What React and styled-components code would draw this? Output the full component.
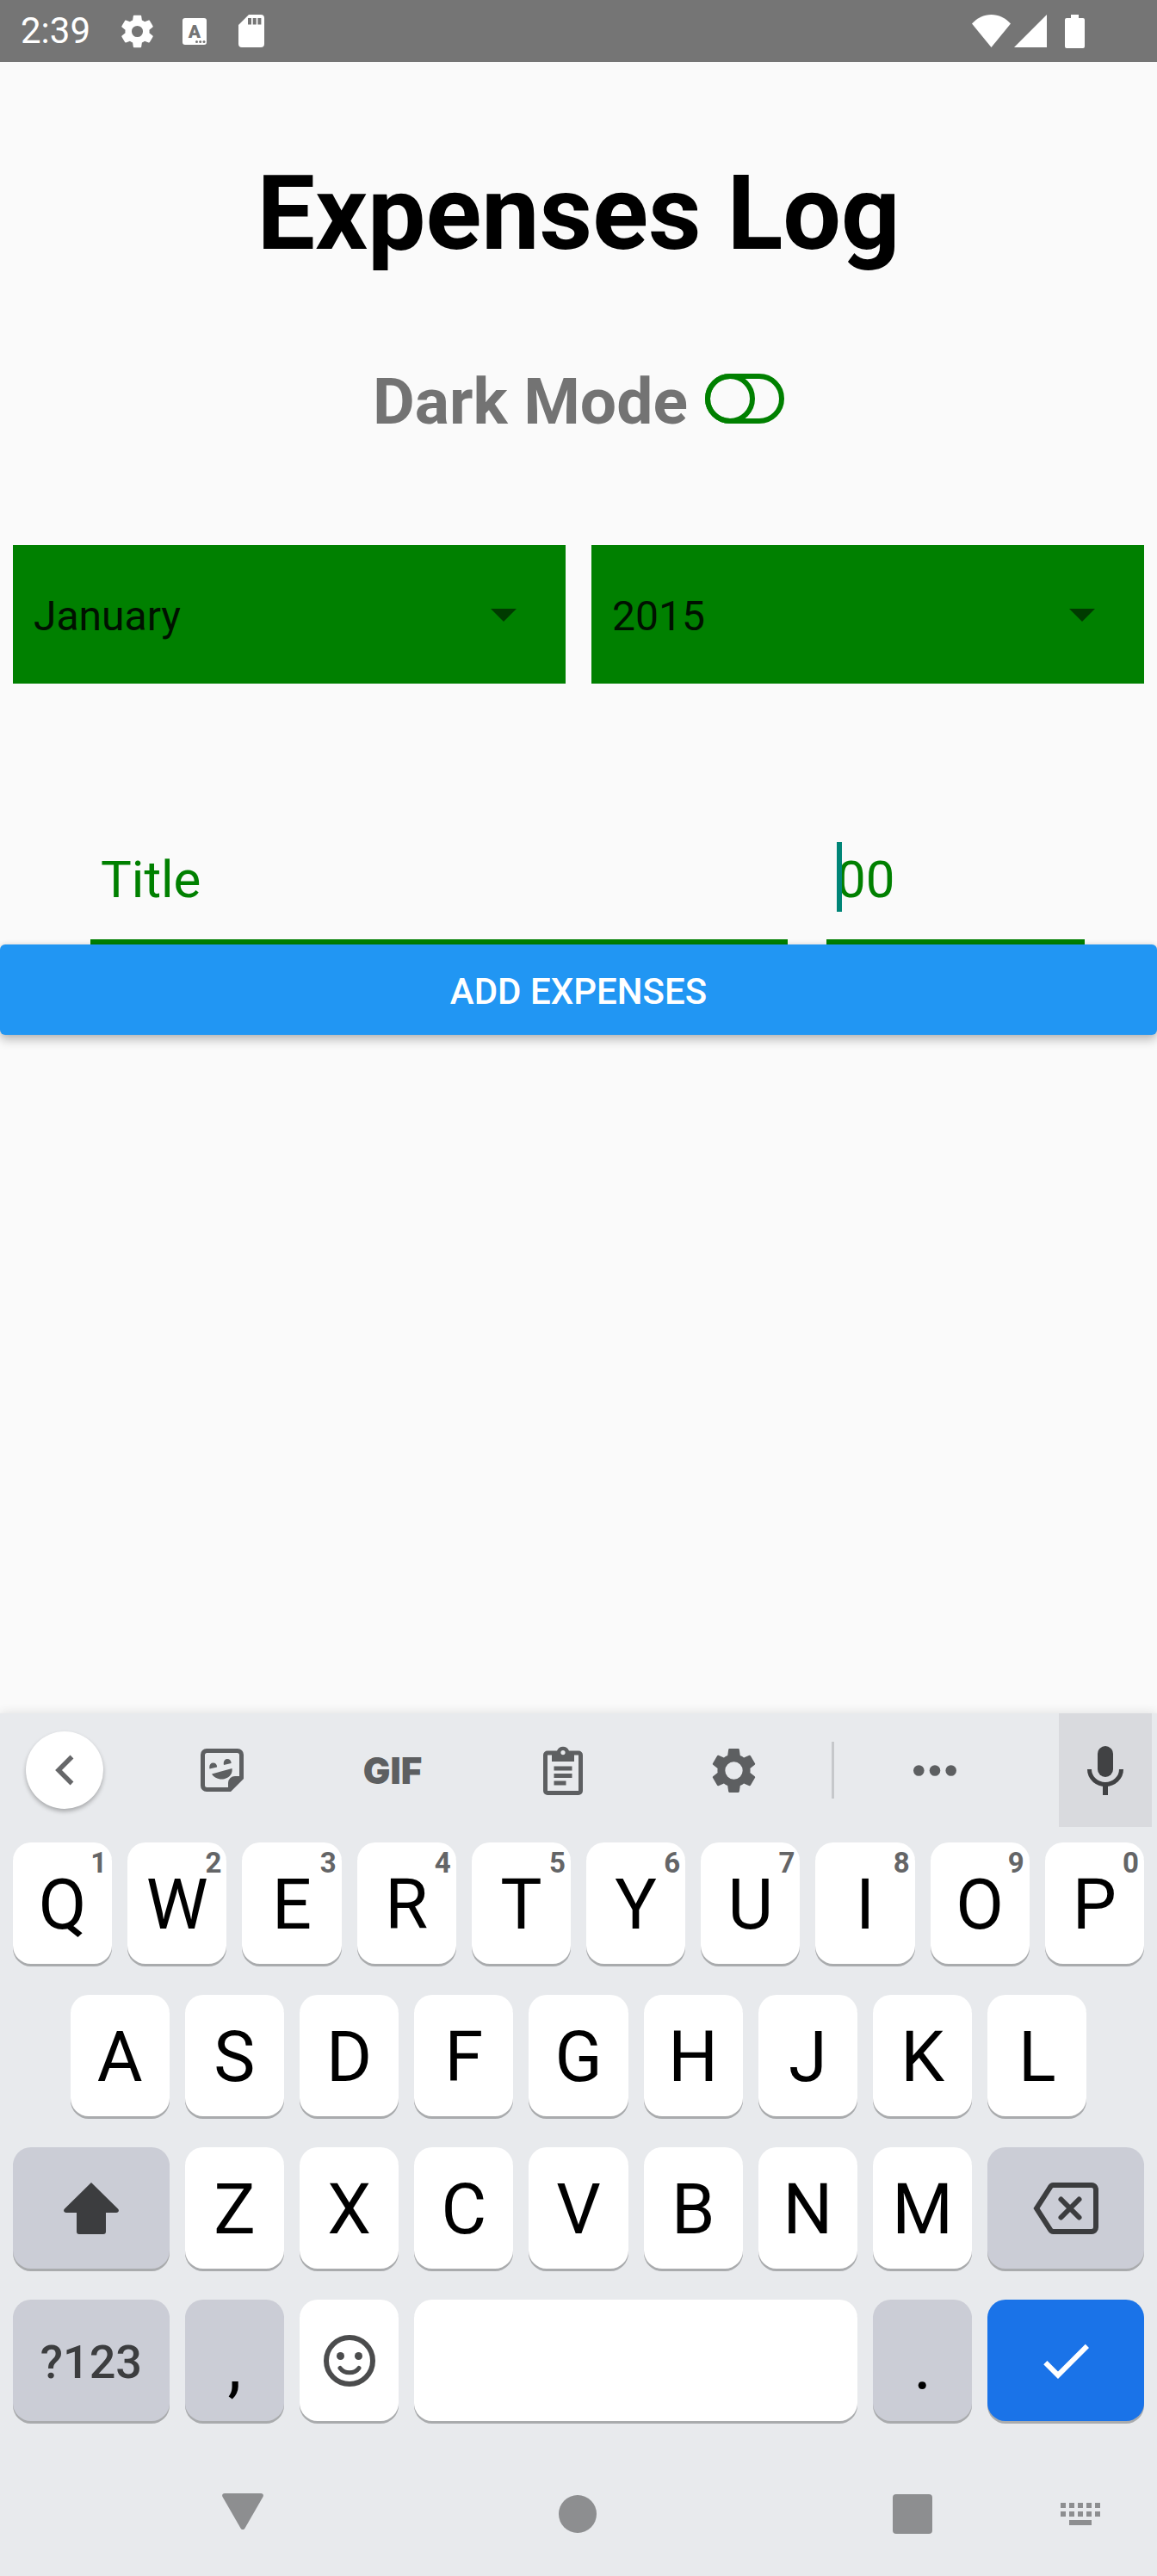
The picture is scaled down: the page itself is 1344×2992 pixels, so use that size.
import React from 'react';
import styled, { createGlobalStyle } from 'styled-components';

const GlobalStyle = createGlobalStyle`
  *, *::before, *::after { box-sizing: border-box; }
  body { margin: 0; background: #fafafa; }
  body, button, input, select { font-family: Roboto, "Liberation Sans", sans-serif; }
  button { border: 0; padding: 0; background: none; color: inherit; cursor: pointer; }
  svg { display: block; }
`;

const Screen = styled.div`
  display: flex;
  flex-direction: column;
  min-height: 100vh;
`;

/* ---------- status bar ---------- */

const StatusBar = styled.header`
  display: flex;
  align-items: center;
  justify-content: space-between;
  height: 72px;
  padding: 0 84px 0 24px;
  background: #757575;
  color: #fff;
`;

const StatusGroup = styled.div`
  display: flex;
  align-items: center;
  gap: ${(p) => p.$gap}px;
`;

const Clock = styled.time`
  font-size: 42px;
  line-height: 48px;
`;

/* ---------- expenses form ---------- */

const Main = styled.main`
  display: flex;
  flex-direction: column;
`;

const Title = styled.h1`
  margin: 104px 0 102px;
  font-size: 120px;
  font-weight: 700;
  line-height: 144px;
  text-align: center;
  color: #000;
`;

const ModeLabel = styled.label`
  display: flex;
  align-items: center;
  justify-content: center;
  gap: 20px;
  font-size: 75px;
  font-weight: 700;
  line-height: 88px;
  color: #737373;
`;

const Toggle = styled.input`
  appearance: none;
  width: 92px;
  height: 58px;
  margin: 0 0 6px;
  border: 6px solid #008000;
  border-radius: 29px;

  &::before {
    content: '';
    display: block;
    width: 58px;
    height: 58px;
    margin: -6px;
    border: 6px solid #008000;
    border-radius: 50%;
  }

  &:checked::before {
    margin-left: 28px;
  }
`;

const PickerRow = styled.div`
  display: flex;
  gap: 30px;
  margin-top: 123px;
  padding: 0 15px;
`;

const Picker = styled.div`
  position: relative;
  flex: 1;
`;

const PickerSelect = styled.select`
  appearance: none;
  display: block;
  width: 100%;
  height: 161px;
  padding: 4px 102px 0 24px;
  border: 0;
  border-radius: 0;
  background: #008000;
  color: #001100;
  font-size: 48px;
`;

const PickerArrow = styled.svg`
  position: absolute;
  right: 57px;
  top: 74px;
  pointer-events: none;
`;

const FieldRow = styled.div`
  display: flex;
  gap: 45px;
  margin-top: 158px;
  padding: 0 84px 0 105px;
`;

const Field = styled.div`
  position: relative;
  flex: ${(p) => (p.$wide ? '27' : '10')} 1 0;
  min-width: 0;
`;

const TextInput = styled.input`
  display: block;
  width: 100%;
  height: 145px;
  padding: 0 12px;
  border: 0;
  border-bottom: 6px solid #008000;
  outline: 0;
  background: transparent;
  color: #008000;
  font-size: 60px;

  &::placeholder {
    color: #008000;
    opacity: 1;
  }
`;

const Caret = styled.span`
  position: absolute;
  left: 12px;
  top: 26px;
  width: 6px;
  height: 81px;
  background: #008577;
`;

const AddButton = styled.button`
  position: relative;
  height: 105px;
  padding-top: 4px;
  border-radius: 6px;
  background: #2196f3;
  box-shadow: 0 6px 12px rgba(0, 0, 0, 0.24), 0 0 6px rgba(0, 0, 0, 0.1);
  color: #fff;
  font-size: 42px;
  font-weight: 500;
`;

/* ---------- keyboard ---------- */

const Keyboard = styled.section`
  margin-top: auto;
  background: #e8eaed;
  box-shadow: 0 0 12px rgba(0, 0, 0, 0.12);
`;

const Toolbar = styled.div`
  display: flex;
  height: 132px;
  padding-right: 6px;
  color: #5d5f61;
`;

const BackCell = styled.div`
  display: flex;
  align-items: center;
  width: 159px;
  padding-left: 30px;
`;

const RoundButton = styled.button`
  display: grid;
  place-items: center;
  width: 90px;
  height: 90px;
  border-radius: 50%;
  background: #fff;
  box-shadow: 0 3px 5px rgba(0, 0, 0, 0.28);
`;

const Tool = styled.button`
  display: grid;
  place-items: center;
  flex: ${(p) => p.$grow || 33} 1 0;
  font-family: Inter, Roboto, sans-serif;
  font-size: 42px;
  font-weight: 900;
`;

const Divider = styled.div`
  align-self: center;
  width: 3px;
  height: 66px;
  margin: 0 15px;
  background: #c6c8cb;
`;

const MicButton = styled.button`
  display: grid;
  place-items: center;
  width: 108px;
  margin-left: 42px;
  background: #d9dade;
  color: #414244;
`;

const Keys = styled.div`
  display: flex;
  flex-direction: column;
  gap: 36px;
  padding: 18px 15px 36px;
`;

const KeyRow = styled.div`
  display: grid;
  grid-template-columns: repeat(20, 1fr);
  column-gap: 18px;

  & > :first-child {
    grid-column-start: ${(p) => (p.$indent ? 2 : 1)};
  }
`;

const tones = {
  letter: ['#fff', '#000'],
  muted: ['#cbcdd6', '#3c3d3f'],
  mark: ['#cbcdd6', '#000'],
  action: ['#1a73e8', '#fff'],
};

const Key = styled.button`
  position: relative;
  display: grid;
  place-items: center;
  grid-column-end: span ${(p) => p.$span || 2};
  height: 141px;
  padding-top: ${(p) => (p.$tone === 'mark' ? 12 : p.$icon ? 0 : 5)}px;
  border-radius: 21px;
  background: ${(p) => tones[p.$tone || 'letter'][0]};
  box-shadow: 0 3px 0 #a9abad;
  color: ${(p) => tones[p.$tone || 'letter'][1]};
  font-size: ${(p) => (p.$small ? 54 : 81)}px;
  font-weight: ${(p) => (p.$small ? 500 : 400)};
  line-height: 96px;
`;

const Hint = styled.span`
  position: absolute;
  top: 6px;
  right: 6px;
  color: #646567;
  font-size: 33px;
  font-weight: 700;
  line-height: 36px;
`;

/* ---------- navigation bar ---------- */

const NavBar = styled.nav`
  display: flex;
  align-items: center;
  gap: 105px;
  height: 144px;
  padding: 0 44px 0 237px;
  color: #8d8e90;
`;

const NavGroup = styled.div`
  display: flex;
  flex: 1;
  justify-content: space-between;
`;

const NavButton = styled.button`
  display: grid;
  place-items: center;
  width: 90px;
  height: 90px;
`;

/* ---------- icons ---------- */

const Icon = ({ size, children }) => (
  <svg width={size} height={size} viewBox="0 0 24 24" fill="currentColor" aria-hidden="true">
    {children}
  </svg>
);

const gearBody =
  'M19.43 12.98c.04-.32.07-.64.07-.98s-.03-.66-.07-.98l2.11-1.65c.19-.15.24-.42.12-.64l-2-3.46c-.12-.22-.39-.3-.61-.22l-2.49 1c-.52-.4-1.08-.73-1.69-.98l-.38-2.65C14.46 2.18 14.25 2 14 2h-4c-.25 0-.46.18-.49.42l-.38 2.65c-.61.25-1.17.59-1.69.98l-2.49-1c-.23-.09-.49 0-.61.22l-2 3.46c-.13.22-.07.49.12.64l2.11 1.65c-.04.32-.07.65-.07.98s.03.66.07.98l-2.11 1.65c-.19.15-.24.42-.12.64l2 3.46c.12.22.39.3.61.22l2.49-1c.52.4 1.08.73 1.69.98l.38 2.65c.03.24.24.42.49.42h4c.25 0 .46-.18.49-.42l.38-2.65c.61-.25 1.17-.59 1.69-.98l2.49 1c.23.09.49 0 .61-.22l2-3.46c.12-.22.07-.49-.12-.64l-2.11-1.65z';

const GearIcon = ({ size, hole }) => (
  <Icon size={size}>
    <path
      fillRule="evenodd"
      d={`${gearBody}M12 ${12 + hole}a${hole} ${hole} 0 1 1 0 ${-2 * hole}a${hole} ${hole} 0 1 1 0 ${2 * hole}z`}
    />
  </Icon>
);

const InputMethodIcon = () => (
  <svg width="28" height="31" viewBox="0 0 28 31" aria-hidden="true">
    <rect width="28" height="31" rx="3" fill="#fff" />
    <text x="14" y="23" textAnchor="middle" fontFamily="Roboto, sans-serif" fontSize="21" fontWeight="900" fill="#757575">
      A
    </text>
    <g fill="#757575">
      <circle cx="16.500" cy="27.500" r="1.500" />
      <circle cx="20.700" cy="27.500" r="1.500" />
      <circle cx="25" cy="27.500" r="1.500" />
    </g>
  </svg>
);

const SdCardIcon = () => (
  <svg width="30" height="38" viewBox="0 0 30 38" aria-hidden="true">
    <path
      fill="#fff"
      fillRule="evenodd"
      d="M26 0H12L0 12v22a4 4 0 0 0 4 4h22a4 4 0 0 0 4-4V4a4 4 0 0 0-4-4zM15 11.500h-4V4h4zM20.700 11.500h-4V4h4zM26.400 11.500h-4V4h4z"
    />
  </svg>
);

const WifiIcon = () => (
  <svg width="45" height="38" viewBox="0 0 45 38" aria-hidden="true">
    <path fill="#fff" d="M0 10.500C6 4 14 0 22.500 0S39 4 45 10.500L22.500 38z" />
  </svg>
);

const SignalIcon = () => (
  <svg width="38" height="38" viewBox="0 0 38 38" aria-hidden="true">
    <path fill="#fff" d="M0 38L38 0v38z" />
  </svg>
);

const BatteryIcon = () => (
  <svg width="23" height="39" viewBox="0 0 23 39" aria-hidden="true">
    <path fill="#fff" d="M7 0h9v4h5a2 2 0 0 1 2 2v31a2 2 0 0 1-2 2H2a2 2 0 0 1-2-2V6a2 2 0 0 1 2-2h5z" />
  </svg>
);

const ChevronIcon = () => (
  <svg width="22" height="36" viewBox="0 0 22 36" aria-hidden="true">
    <path d="M19.500 2.500L4 18l15.500 15.500" fill="none" stroke="#666769" strokeWidth="5.500" />
  </svg>
);

const StickerIcon = () => (
  <svg width="50" height="50" viewBox="0 0 50 50" fill="currentColor" aria-hidden="true">
    <path
      fillRule="evenodd"
      d="M7 0h36a7 7 0 0 1 7 7v28L35 50H7a7 7 0 0 1-7-7V7a7 7 0 0 1 7-7zM7.500 5A2.500 2.500 0 0 0 5 7.500v35A2.500 2.500 0 0 0 7.500 45H32v-5a8 8 0 0 1 8-8h5V7.500A2.500 2.500 0 0 0 42.500 5z"
    />
    <path d="M13 29.500L36.500 23c1 6-3 11-9 12.200S15.500 34 13 29.500z" />
    <path d="M10.500 23.500c-1-4 1-7 4-7s5 2.500 4.500 5zM27 19c-1-4 1-7 4-7s5 2.500 4.500 5z" />
  </svg>
);

const ClipboardIcon = () => (
  <svg width="46" height="57" viewBox="0 0 46 57" fill="currentColor" aria-hidden="true">
    <path
      fillRule="evenodd"
      d="M5 5.500h11a7.500 7.500 0 0 1 14 0h11a5 5 0 0 1 5 5V52a5 5 0 0 1-5 5H5a5 5 0 0 1-5-5V10.500a5 5 0 0 1 5-5zM5 10.500V52h36V10.500h-5V18H10v-7.500zM23 5a2.600 2.600 0 1 0 0 5.200A2.600 2.600 0 0 0 23 5z"
    />
    <path d="M12.500 23.500h21v5h-21zM12.500 32h21v5h-21zM12.500 40.500h14v5h-14z" />
  </svg>
);

const MoreIcon = () => (
  <svg width="50" height="13" viewBox="0 0 50 13" fill="currentColor" aria-hidden="true">
    <circle cx="6.300" cy="6.500" r="6.300" />
    <circle cx="25" cy="6.500" r="6.300" />
    <circle cx="43.700" cy="6.500" r="6.300" />
  </svg>
);

const MicIcon = () => (
  <svg width="42" height="57" viewBox="0 0 42 57" fill="currentColor" aria-hidden="true">
    <rect x="12" width="18" height="36" rx="9" />
    <path d="M2.500 27a18.500 17.500 0 0 0 37 0" fill="none" stroke="currentColor" strokeWidth="5" />
    <path d="M18 45h6v12h-6z" />
  </svg>
);

const ShiftIcon = () => (
  <svg width="64" height="60" viewBox="0 0 64 60" fill="currentColor" aria-hidden="true">
    <path d="M32 0l31 30.500c2 2 .5 4.500-2 4.500H49v22a3 3 0 0 1-3 3H18a3 3 0 0 1-3-3V35H3c-2.500 0-4-2.500-2-4.500z" />
  </svg>
);

const BackspaceIcon = () => (
  <svg width="76" height="60" viewBox="0 0 76 60" fill="none" stroke="currentColor" strokeWidth="6" aria-hidden="true">
    <path d="M23.500 3H68a5 5 0 0 1 5 5v44a5 5 0 0 1-5 5H23.500a4 4 0 0 1-3.300-2L4 30 20.200 5a4 4 0 0 1 3.300-2z" />
    <path d="M32.500 19.500l21 21M53.500 19.500l-21 21" strokeLinecap="round" />
  </svg>
);

const SmileIcon = () => (
  <svg width="60" height="60" viewBox="0 0 60 60" fill="none" stroke="#4b4c4d" aria-hidden="true">
    <circle cx="30" cy="30" r="27" strokeWidth="6" />
    <path d="M19 38.500c5 7 17 7 22 0" strokeWidth="5" strokeLinecap="round" />
    <g fill="#4b4c4d" stroke="none">
      <circle cx="19.500" cy="24.500" r="4.500" />
      <circle cx="40.500" cy="24.500" r="4.500" />
    </g>
  </svg>
);

const CheckIcon = () => (
  <Icon size={72}>
    <path d="M9 16.170L4.830 12l-1.420 1.410L9 19 21 7l-1.410-1.410z" />
  </Icon>
);

const NavBackIcon = () => (
  <svg width="48" height="48" viewBox="0 0 48 48" fill="currentColor" aria-hidden="true">
    <path d="M3 0h42c2.500 0 3.500 2 2.500 4L26.500 40.500c-1.200 2-3.800 2-5 0L.5 4C-.5 2 .5 0 3 0z" />
  </svg>
);

const NavHomeIcon = () => (
  <svg width="44" height="44" viewBox="0 0 44 44" fill="currentColor" aria-hidden="true">
    <circle cx="22" cy="22" r="22" />
  </svg>
);

const NavRecentsIcon = () => (
  <svg width="46" height="46" viewBox="0 0 46 46" fill="currentColor" aria-hidden="true">
    <rect width="46" height="46" rx="4" />
  </svg>
);

const NavKeyboardIcon = () => (
  <svg width="46" height="26" viewBox="0 0 46 26" fill="currentColor" aria-hidden="true">
    {[0, 10, 20, 30, 40].map((x) => (
      <React.Fragment key={x}>
        <rect x={x} y="0" width="6" height="6" />
        <rect x={x} y="10" width="6" height="6" />
      </React.Fragment>
    ))}
    <rect x="10" y="20" width="26" height="6" />
  </svg>
);

/* ---------- data ---------- */

const months = ['January', 'February', 'March', 'April', 'May', 'June', 'July', 'August', 'September', 'October', 'November', 'December'];
const years = ['2015', '2016', '2017', '2018', '2019', '2020', '2021', '2022'];
const topRow = [...'QWERTYUIOP'];
const topHints = [...'1234567890'];

const Dropdown = ({ label, options }) => (
  <Picker>
    <PickerSelect aria-label={label} defaultValue={options[0]}>
      {options.map((o) => (
        <option key={o}>{o}</option>
      ))}
    </PickerSelect>
    <PickerArrow width="30" height="15" viewBox="0 0 30 15" aria-hidden="true">
      <path d="M0 0h30L15 15z" fill="#003b00" />
    </PickerArrow>
  </Picker>
);

export default function App() {
  return (
    <Screen>
      <GlobalStyle />
      <StatusBar>
        <StatusGroup $gap={30}>
          <StatusGroup $gap={32}>
            <Clock>2:39</Clock>
            <GearIcon size={45} hole={3.5} />
          </StatusGroup>
          <StatusGroup $gap={37}>
            <InputMethodIcon />
            <SdCardIcon />
          </StatusGroup>
        </StatusGroup>
        <StatusGroup $gap={21}>
          <StatusGroup $gap={4}>
            <WifiIcon />
            <SignalIcon />
          </StatusGroup>
          <BatteryIcon />
        </StatusGroup>
      </StatusBar>

      <Main>
        <Title>Expenses Log</Title>
        <ModeLabel>
          Dark Mode
          <Toggle type="checkbox" role="switch" />
        </ModeLabel>
        <PickerRow>
          <Dropdown label="Month" options={months} />
          <Dropdown label="Year" options={years} />
        </PickerRow>
        <FieldRow>
          <Field $wide>
            <TextInput type="text" placeholder="Title" aria-label="Title" />
          </Field>
          <Field>
            <Caret />
            <TextInput type="text" inputMode="decimal" placeholder="00" aria-label="Amount" />
          </Field>
        </FieldRow>
        <AddButton type="button">ADD EXPENSES</AddButton>
      </Main>

      <Keyboard aria-label="Keyboard">
        <Toolbar>
          <BackCell>
            <RoundButton type="button" aria-label="Back">
              <ChevronIcon />
            </RoundButton>
          </BackCell>
          <Tool type="button" aria-label="Stickers"><StickerIcon /></Tool>
          <Tool type="button">GIF</Tool>
          <Tool type="button" aria-label="Clipboard"><ClipboardIcon /></Tool>
          <Tool type="button" aria-label="Settings"><GearIcon size={61} hole={4} /></Tool>
          <Divider />
          <Tool type="button" $grow={34} aria-label="More"><MoreIcon /></Tool>
          <MicButton type="button" aria-label="Voice input"><MicIcon /></MicButton>
        </Toolbar>

        <Keys>
          <KeyRow>
            {topRow.map((k, i) => (
              <Key type="button" key={k}>
                {k}
                <Hint>{topHints[i]}</Hint>
              </Key>
            ))}
          </KeyRow>
          <KeyRow $indent>
            {[...'ASDFGHJKL'].map((k) => (
              <Key type="button" key={k}>{k}</Key>
            ))}
          </KeyRow>
          <KeyRow>
            <Key type="button" $icon $span={3} $tone="muted" aria-label="Shift"><ShiftIcon /></Key>
            {[...'ZXCVBNM'].map((k) => (
              <Key type="button" key={k}>{k}</Key>
            ))}
            <Key type="button" $icon $span={3} $tone="muted" aria-label="Backspace"><BackspaceIcon /></Key>
          </KeyRow>
          <KeyRow>
            <Key type="button" $span={3} $tone="muted" $small>?123</Key>
            <Key type="button" $tone="mark">,</Key>
            <Key type="button" $icon aria-label="Emoji"><SmileIcon /></Key>
            <Key type="button" $span={8} aria-label="Space" />
            <Key type="button" $tone="mark">.</Key>
            <Key type="button" $icon $span={3} $tone="action" aria-label="Done"><CheckIcon /></Key>
          </KeyRow>
        </Keys>

        <NavBar aria-label="System">
          <NavGroup>
            <NavButton type="button" aria-label="Hide keyboard"><NavBackIcon /></NavButton>
            <NavButton type="button" aria-label="Home"><NavHomeIcon /></NavButton>
            <NavButton type="button" aria-label="Recent apps"><NavRecentsIcon /></NavButton>
          </NavGroup>
          <NavButton type="button" aria-label="Switch keyboard"><NavKeyboardIcon /></NavButton>
        </NavBar>
      </Keyboard>
    </Screen>
  );
}
